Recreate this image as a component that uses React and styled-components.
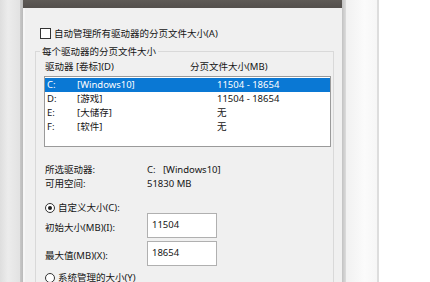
import React from "react";
import styled, { createGlobalStyle } from "styled-components";

const Global = createGlobalStyle`
  html, body { margin: 0; padding: 0; background: #ffffff; }
  body {
    font-family: "Noto Sans", "Noto Sans CJK SC", sans-serif;
    font-size: 9.5px;
    color: #151515;
  }
`;

const Page = styled.div`
  display: flex;
  width: 430px;
  height: 282px;
  overflow: hidden;
  background: #ffffff;
`;

const LeftStrip = styled.div`
  width: 20px;
  flex: none;
  background: linear-gradient(90deg, #dedede 0%, #ececec 40%, #e2e2e2 100%);
`;

const LeftEdge = styled.div`
  width: 3px;
  flex: none;
  background: linear-gradient(90deg, #c9c9c9, #b9b9b9);
`;

const Dialog = styled.div`
  width: 319px;
  flex: none;
  display: flex;
  flex-direction: column;
  background: #f0f0f0;
`;

const TitleBar = styled.div`
  height: 8px;
  flex: none;
  background: linear-gradient(180deg, #5e5a56, #534f4c);
`;

const Body = styled.div`
  flex: 1;
  padding-left: 12px;
  border-left: 2px solid #f6f6f6;
  display: flex;
  flex-direction: column;
`;

const CheckRow = styled.div`
  margin-top: 20px;
  height: 11px;
  display: flex;
  align-items: center;
  gap: 3px;
  padding-left: 3px;
  line-height: 11px;
`;

const CheckBox = styled.span`
  width: 9px;
  height: 9px;
  border: 1px solid #333;
  background: #fff;
  flex: none;
`;

const Group = styled.fieldset`
  margin: 6px 0 0 -2px;
  padding: 0;
  width: 299px;
  min-height: 320px;
  border: 1px solid #d9d9d9;
  box-sizing: border-box;
`;

const Legend = styled.legend`
  margin-left: 4px;
  padding: 0 2px;
  line-height: 13px;
  height: 13px;
`;

const HeaderRow = styled.div`
  margin-top: 2px;
  height: 14px;
  line-height: 14px;
  display: flex;
  padding-left: 9px;
`;

const HeaderCell = styled.span`
  width: ${(p) => p.$w}px;
  flex: none;
`;

const List = styled.div`
  margin: 2px 0 0 8px;
  width: 287px;
  height: 71px;
  box-sizing: border-box;
  border: 1px solid #9a9a9a;
  background: #ffffff;
  padding-top: 1px;
`;

const Row = styled.div`
  height: 14px;
  line-height: 14px;
  display: flex;
  padding-left: 2px;
  background: ${(p) => (p.$selected ? "#0a78d4" : "transparent")};
  color: ${(p) => (p.$selected ? "#ffffff" : "#151515")};
`;

const Cell = styled.span`
  width: ${(p) => (p.$w ? `${p.$w}px` : "auto")};
  flex: none;
  white-space: pre;
`;

const InfoBlock = styled.div`
  margin-top: 16px;
  padding-left: 9px;
`;

const InfoRow = styled.div`
  height: 14px;
  line-height: 14px;
  display: flex;
`;

const InfoLabel = styled.span`
  width: 102px;
  flex: none;
`;

const InfoValue = styled.span`
  white-space: pre;
`;

const RadioRow = styled.div`
  margin-top: ${(p) => p.$mt}px;
  height: 10px;
  line-height: 10px;
  display: flex;
  align-items: center;
  gap: 3px;
  padding-left: 9px;
`;

const Radio = styled.span`
  width: 8px;
  height: 8px;
  border: 1px solid #333;
  border-radius: 50%;
  background: #fff;
  flex: none;
  display: flex;
  align-items: center;
  justify-content: center;
  &::after {
    content: "";
    width: 4px;
    height: 4px;
    border-radius: 50%;
    background: ${(p) => (p.$on ? "#1e1e1e" : "transparent")};
  }
`;

const FieldRow = styled.div`
  margin-top: ${(p) => p.$mt}px;
  height: 25px;
  display: flex;
  align-items: center;
  padding-left: 9px;
`;

const FieldLabel = styled.span`
  width: 102px;
  flex: none;
  padding-top: 3px;
  line-height: 13px;
`;

const Input = styled.div`
  width: 70px;
  height: 25px;
  box-sizing: border-box;
  border: 1px solid #b0b0b0;
  background: #ffffff;
  padding: 4px 0 0 4px;
  line-height: 13px;
`;

const ShadowEdge = styled.div`
  width: 4px;
  flex: none;
  background: linear-gradient(90deg, #c2c2c2, #dcdcdc);
`;

const PaleBand = styled.div`
  width: 31px;
  flex: none;
  background: linear-gradient(90deg, #f1f1f1, #fbfbfb 60%, #f6f6f6);
`;

const ThinLine = styled.div`
  width: 2px;
  flex: none;
  background: #dddddd;
`;

const Rest = styled.div`
  flex: 1;
  background: #ffffff;
`;

const drives = [
  { d: "C:", l: "[Windows10]", s: "11504 - 18654", sel: true },
  { d: "D:", l: "[游戏]", s: "11504 - 18654" },
  { d: "E:", l: "[大储存]", s: "无" },
  { d: "F:", l: "[软件]", s: "无" },
];

export default function App() {
  return (
    <>
      <Global />
      <Page>
        <LeftStrip />
        <LeftEdge />
        <Dialog>
          <TitleBar />
          <Body>
            <CheckRow>
              <CheckBox />
              <span>自动管理所有驱动器的分页文件大小(A)</span>
            </CheckRow>
            <Group>
              <Legend>每个驱动器的分页文件大小</Legend>
              <HeaderRow>
                <HeaderCell $w={145}>驱动器 [卷标](D)</HeaderCell>
                <HeaderCell $w={120}>分页文件大小(MB)</HeaderCell>
              </HeaderRow>
              <List>
                {drives.map((r) => (
                  <Row key={r.d} $selected={r.sel}>
                    <Cell $w={30}>{r.d}</Cell>
                    <Cell $w={140}>{r.l}</Cell>
                    <Cell>{r.s}</Cell>
                  </Row>
                ))}
              </List>
              <InfoBlock>
                <InfoRow>
                  <InfoLabel>所选驱动器:</InfoLabel>
                  <InfoValue>{"C:   [Windows10]"}</InfoValue>
                </InfoRow>
                <InfoRow>
                  <InfoLabel>可用空间:</InfoLabel>
                  <InfoValue>51830 MB</InfoValue>
                </InfoRow>
              </InfoBlock>
              <RadioRow $mt={12}>
                <Radio $on />
                <span>自定义大小(C):</span>
              </RadioRow>
              <FieldRow $mt={0}>
                <FieldLabel>初始大小(MB)(I):</FieldLabel>
                <Input>11504</Input>
              </FieldRow>
              <FieldRow $mt={3}>
                <FieldLabel>最大值(MB)(X):</FieldLabel>
                <Input>18654</Input>
              </FieldRow>
              <RadioRow $mt={7}>
                <Radio />
                <span>系统管理的大小(Y)</span>
              </RadioRow>
            </Group>
          </Body>
        </Dialog>
        <ShadowEdge />
        <PaleBand />
        <ThinLine />
        <Rest />
      </Page>
    </>
  );
}
